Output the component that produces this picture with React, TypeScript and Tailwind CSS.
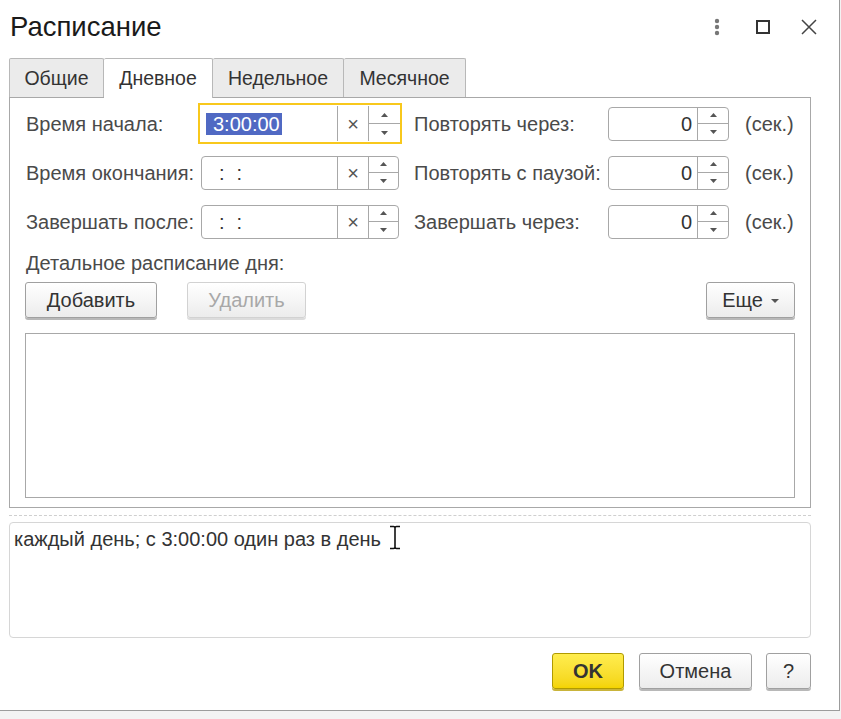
import React from "react";

const font = { fontFamily: '"Liberation Sans", Arial, sans-serif' };

function Spinner({ w = 30 }: { w?: number }) {
  return (
    <div className="flex flex-col h-full border-l border-[#a8a8a8]" style={{ width: w }}>
      <div className="flex-1 flex items-center justify-center border-b border-[#a8a8a8]">
        <svg width="7" height="4" viewBox="0 0 7 4"><path d="M3.5 0 L7 4 L0 4 Z" fill="#555" /></svg>
      </div>
      <div className="flex-1 flex items-center justify-center">
        <svg width="7" height="4" viewBox="0 0 7 4"><path d="M0 0 L7 0 L3.5 4 Z" fill="#555" /></svg>
      </div>
    </div>
  );
}

function Clear() {
  return (
    <div className="w-[31px] h-full flex items-center justify-center border-l border-[#a8a8a8] text-[#555] text-[20px] leading-none">
      ×
    </div>
  );
}

function TimeField({ focused, value }: { focused?: boolean; value?: string }) {
  if (focused) {
    return (
      <div className="w-[204px] h-[41px] border-2 border-[#f8c81c] bg-white flex items-stretch">
        <div className="flex-1 flex items-center pl-[6px]">
          <span className="bg-[#5069c3] text-white text-[20px] leading-[22px] pl-[7px] pr-[2px]">{value}</span>
        </div>
        <div className="flex items-stretch h-full py-[1px]">
          <Clear />
          <Spinner w={32} />
        </div>
      </div>
    );
  }
  return (
    <div className="w-[198px] h-[34px] border border-[#a8a8a8] rounded-[4px] bg-white flex items-stretch">
      <div className="flex-1 flex items-center pl-[17px] text-[20px] text-[#333]">
        <span>:</span>
        <span className="ml-[12px]">:</span>
      </div>
      <Clear />
      <Spinner w={30} />
    </div>
  );
}

function NumField() {
  return (
    <div className="w-[121px] h-[34px] border border-[#a8a8a8] rounded-[4px] bg-white flex items-stretch">
      <div className="flex-1 flex items-center justify-end pr-[5px] text-[20px] text-[#333]">0</div>
      <Spinner w={31} />
    </div>
  );
}

function Row({ label, field, label2 }: { label: string; field: React.ReactNode; label2: string }) {
  return (
    <div className="flex items-center h-[41px]">
      <div className="w-[172px] text-[20px] text-[#4a4a4a] whitespace-nowrap">{label}</div>
      <div className="w-[204px] flex items-center justify-center">{field}</div>
      <div className="ml-[12px] w-[194px] text-[20px] text-[#4a4a4a] whitespace-nowrap">{label2}</div>
      <NumField />
      <div className="ml-[16px] text-[20px] text-[#4a4a4a]">(сек.)</div>
    </div>
  );
}

function Btn({ children, w, disabled, className = "" }: { children: React.ReactNode; w: number; disabled?: boolean; className?: string }) {
  return (
    <div
      className={`h-[36px] rounded-[3px] border flex items-center justify-center text-[20px] bg-gradient-to-b from-white to-[#ececec] ${
        disabled ? "border-[#d2d2d2] text-[#a8a8a8] shadow-[0_2px_0_#dcdcdc]" : "border-[#a0a0a0] text-[#333] shadow-[0_2px_0_#b8b8b8]"
      } ${className}`}
      style={{ width: w }}
    >
      {children}
    </div>
  );
}

export default function App() {
  const tabs = [
    { t: "Общие", w: 95 },
    { t: "Дневное", w: 109, active: true },
    { t: "Недельное", w: 131 },
    { t: "Месячное", w: 122 },
  ];
  return (
    <div className="w-[841px] h-[719px] bg-[#f3f3f3] overflow-hidden" style={font}>
      <div className="w-[840px] h-[711px] bg-white border-r border-b border-[#9c9c9c] flex flex-col">
        {/* Header */}
        <div className="h-[54px] flex items-center pl-[10px] pr-[22px] shrink-0">
          <div className="text-[27.5px] text-[#1a1a1a] flex-1">Расписание</div>
          <svg width="6" height="18" viewBox="0 0 6 18" className="mr-[36px]">
            <circle cx="3" cy="3" r="2.2" fill="#777" />
            <circle cx="3" cy="9" r="2.2" fill="#777" />
            <circle cx="3" cy="15" r="2.2" fill="#777" />
          </svg>
          <svg width="14" height="14" viewBox="0 0 14 14" className="mr-[31px]">
            <rect x="1" y="1" width="12" height="12" fill="none" stroke="#333" strokeWidth="2" />
          </svg>
          <svg width="16" height="16" viewBox="0 0 16 16">
            <path d="M1 1 L15 15 M15 1 L1 15" stroke="#444" strokeWidth="1.5" />
          </svg>
        </div>

        {/* Tabs */}
        <div className="flex pl-[9px] mt-[4px] shrink-0">
          {tabs.map((tab, i) => (
            <div
              key={tab.t}
              className={`h-[40px] flex items-center justify-center text-[19.5px] text-[#333] border-t border-r border-[#b8b8b8] rounded-t-[2px] ${
                i === 0 ? "border-l" : ""
              } ${tab.active ? "bg-white relative z-10" : "bg-[#ebebeb]"}`}
              style={{ width: tab.w }}
            >
              {tab.t}
            </div>
          ))}
        </div>

        {/* Panel */}
        <div className="ml-[9px] w-[802px] h-[411px] -mt-px border border-[#a8a8a8] pl-[16px] pr-[15px] pt-[5px] flex flex-col shrink-0">
          <div className="flex flex-col gap-[8px]">
            <Row label="Время начала:" field={<TimeField focused value="3:00:00" />} label2="Повторять через:" />
            <Row label="Время окончания:" field={<TimeField />} label2="Повторять с паузой:" />
            <Row label="Завершать после:" field={<TimeField />} label2="Завершать через:" />
          </div>
          <div className="mt-[10px] text-[20px] leading-[23px] text-[#4a4a4a]">Детальное расписание дня:</div>
          <div className="mt-[7px] h-[38px] flex items-start">
            <Btn w={132} className="-ml-px">Добавить</Btn>
            <Btn w={119} disabled className="ml-[30px]">Удалить</Btn>
            <Btn w={89} className="ml-auto">
              <span>Еще</span>
              <svg width="8" height="4" viewBox="0 0 8 4" className="ml-[8px] mt-[2px]">
                <path d="M0 0 L8 0 L4 4 Z" fill="#555" />
              </svg>
            </Btn>
          </div>
          <div className="mt-[13px] -ml-px h-[165px] border border-[#a8a8a8] bg-white" />
        </div>

        {/* Dashed separator */}
        <div className="ml-[9px] w-[802px] mt-[7px] border-t border-dashed border-[#cfcfcf]" />

        {/* Summary text area */}
        <div className="ml-[9px] w-[802px] h-[116px] mt-[6px] border border-[#d6d6d6] rounded-[4px] pl-[4px] pt-[5px] shrink-0">
          <div className="flex items-start text-[20px] leading-[23px] text-[#333]">
            <span>каждый день; с 3:00:00 один раз в день</span>
            <svg width="14" height="25" viewBox="0 0 14 25" className="ml-[7px] -mt-[3px]">
              <path d="M2 1.5 H5.5 Q7 1.5 7 3 V22 Q7 23.5 5.5 23.5 H2 M12 1.5 H8.5 Q7 1.5 7 3 M7 22 Q7 23.5 8.5 23.5 H12" fill="none" stroke="#111" strokeWidth="1.6" />
            </svg>
          </div>
        </div>

        {/* Bottom buttons */}
        <div className="mt-[15px] flex justify-end pr-[28px]">
          <div className="w-[72px] h-[36px] rounded-[3px] border border-[#b09a00] bg-gradient-to-b from-[#ffed4d] to-[#f4d400] shadow-[0_2px_0_#c9b43a] flex items-center justify-center text-[20px] font-bold text-[#333]">
            OK
          </div>
          <Btn w={113} className="ml-[15px]">Отмена</Btn>
          <Btn w={45} className="ml-[14px]">?</Btn>
        </div>
      </div>
    </div>
  );
}
